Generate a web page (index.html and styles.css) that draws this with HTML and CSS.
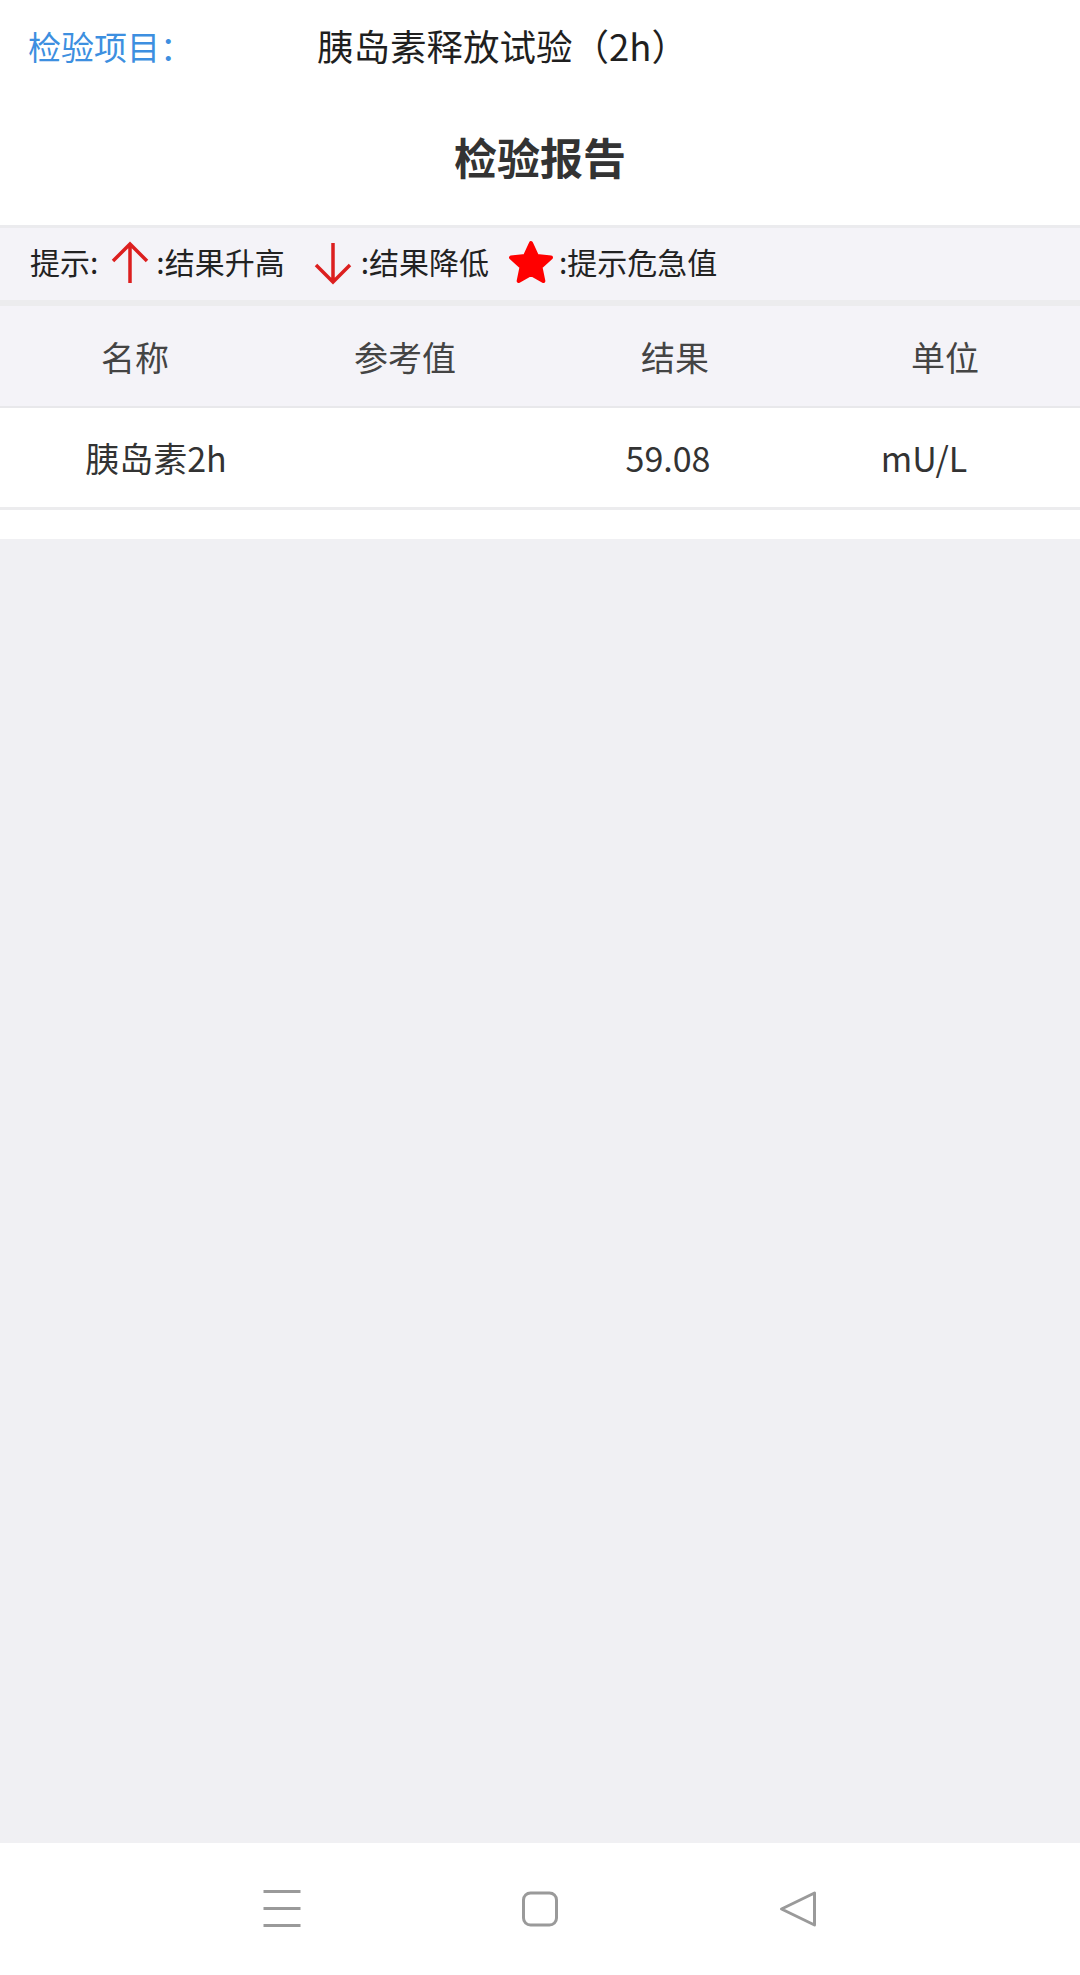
FILE: index.html
```html
<!DOCTYPE html>
<html lang="zh-CN">
  <head>
    <meta charset="utf-8" />
    <meta name="viewport" content="width=device-width, initial-scale=1" />
    <title>检验报告</title>
    <link rel="stylesheet" href="styles.css">
  </head>
  <body>
    <div class="page">
      <header class="top">
        <div class="item">
          <span class="item-label">检验项目：</span>
          <span class="item-name">胰岛素释放试验（2h）</span>
        </div>
        <h1 class="report-title">检验报告</h1>
      </header>

      <!-- legend -->
      <div class="legend">
        <span>提示:</span>
        <svg class="ico-up" width="40" height="44" viewBox="0 0 40 44">
          <path d="M20 3 V42 M3 20 L20 3 L37 20" />
        </svg>
        <span class="txt-up">:结果升高</span>
        <svg class="ico-down" width="40" height="44" viewBox="0 0 40 44">
          <path d="M20 2 V41 M3 24 L20 41 L37 24" />
        </svg>
        <span class="txt-down">:结果降低</span>
        <svg class="ico-star" width="48" height="46" viewBox="0 0 48 46">
          <polygon points="24,3 29.88,15.91 43.97,17.51 33.51,27.09 36.34,40.99 24,34 11.66,40.99 14.49,27.09 4.03,17.51 18.12,15.91" />
        </svg>
        <span class="txt-star">:提示危急值</span>
      </div>

      <div class="table">
        <div class="row head">
          <span>名称</span>
          <span>参考值</span>
          <span>结果</span>
          <span>单位</span>
        </div>
        <div class="row data">
          <span class="c-name">胰岛素2h</span>
          <span></span>
          <span class="c-result">59.08</span>
          <span class="c-unit">mU/L</span>
        </div>
      </div>

      <main class="blank"></main>

      <nav class="sysbar">
        <svg width="40" height="40" viewBox="0 0 40 40">
          <path d="M1.5 2.5 H38.5 M1.5 19.5 H38.5 M1.5 36.5 H38.5" />
        </svg>
        <svg width="40" height="40" viewBox="0 0 40 40">
          <rect x="3.5" y="4" width="33" height="32" rx="7" />
        </svg>
        <svg width="40" height="40" viewBox="0 0 40 40">
          <polygon points="36.5,4 36.5,36 3.5,20" />
        </svg>
      </nav>
    </div>
  </body>
</html>
```

FILE: styles.css
```css
* {
  box-sizing: border-box;
}
body {
  margin: 0;
  font-family: "Noto Sans CJK SC", sans-serif;
  color: #222;
  background: #fff;
}
.page {
  display: flex;
  flex-direction: column;
  min-height: 100vh;
}

/* top */
.item {
  display: flex;
  align-items: center;
  height: 96px;
  padding-left: 28px;
  padding-bottom: 5px;
}
.item-label {
  flex: none;
  width: 289px;
  color: #3d8fe0;
  font-size: 33px;
}
.item-name {
  font-size: 36.5px;
  color: #1f1f1f;
}
.report-title {
  margin: 0;
  height: 129px;
  padding-bottom: 9px;
  line-height: 120px;
  font-size: 43px;
  font-weight: 700;
  color: #333;
  text-align: center;
}

/* legend */
.legend {
  display: flex;
  align-items: center;
  height: 81px;
  padding-left: 30px;
  padding-bottom: 3px;
  background: #f4f3f8;
  border-top: 3px solid #ebebee;
  border-bottom: 6px solid #ececee;
  font-size: 30px;
  color: #222;
}
.legend span {
  position: relative;
  top: -2px;
}
.legend svg {
  flex: none;
}
.ico-up,
.ico-down {
  fill: none;
  stroke: #dc1f1f;
  stroke-width: 3.5;
}
.ico-up {
  margin-left: 12px;
}
.txt-up {
  margin-left: 6px;
}
.ico-down {
  margin-left: 28px;
}
.txt-down {
  margin-left: 8px;
}
.ico-star {
  margin-left: 18px;
  fill: #ff0000;
  stroke: #ff0000;
  stroke-width: 4;
  stroke-linejoin: round;
}
.txt-star {
  margin-left: 4px;
}

/* table */
.table {
  background: #fff;
  padding-bottom: 29px;
}
.row {
  display: grid;
  grid-template-columns: repeat(4, 1fr);
  align-items: center;
  height: 102px;
  text-align: center;
  font-size: 34px;
}
.head {
  background: #f4f3f8;
  border-bottom: 2px solid #e8e8eb;
  color: #444;
}
.data {
  border-bottom: 3px solid #ececee;
  color: #333;
}
.c-name {
  padding-left: 42px;
}
.c-result {
  padding-right: 14px;
}
.c-unit {
  padding-right: 42px;
}

.blank {
  flex: 1;
  background: #f0f0f3;
}

/* system bar */
.sysbar {
  display: flex;
  justify-content: center;
  align-items: center;
  gap: 218px;
  height: 132px;
  background: #fff;
}
.sysbar svg {
  fill: none;
  stroke: #9a9a9a;
  stroke-width: 3;
  stroke-linejoin: round;
}
```
